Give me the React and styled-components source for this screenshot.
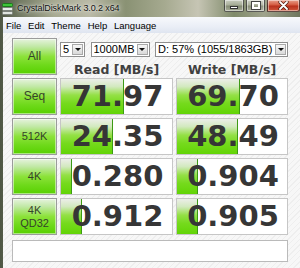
import React from "react";
import styled, { createGlobalStyle } from "styled-components";

const GlobalStyle = createGlobalStyle`
  html, body { margin: 0; padding: 0; width: 300px; height: 268px; overflow: hidden; }
  body { font-family: "Liberation Sans", Arial, sans-serif; }
  * { box-sizing: border-box; }
`;

const Frame = styled.div`
  width: 300px;
  height: 268px;
  display: flex;
  flex-direction: column;
  background: linear-gradient(90deg, #4e5644 0%, #6f7760 6%, #a7aa92 18%, #b9b9a6 30%, #8a9274 42%, #a6aa90 55%, #c6c5b4 66%, #7f8a6a 78%, #9fa38c 88%, #6e765e 100%);
`;

const TitleBar = styled.div`
  height: 17px;
  display: flex;
  align-items: flex-start;
  padding-left: 2px;
`;

const TitleText = styled.div`
  margin-left: 4px;
  margin-top: 3px;
  font-size: 9px;
  letter-spacing: -0.1px;
  line-height: 10px;
  color: #111;
  text-shadow: 0 0 5px rgba(255,255,255,0.9), 0 0 2px rgba(255,255,255,0.8);
  white-space: nowrap;
`;

const WinButtons = styled.div`
  margin-left: auto;
  display: flex;
  gap: 2px;
  height: 12px;
`;

const WinButton = styled.div`
  width: ${p => p.$w}px;
  height: 12px;
  border: 1px solid rgba(40, 40, 40, 0.7);
  border-top: none;
  border-radius: 0 0 ${p => (p.$close ? "3px 0" : "2px 2px")};
  background: ${p =>
    p.$close
      ? "linear-gradient(#e8a08c 0%, #d45a40 45%, #b8301c 55%, #d0583c 100%)"
      : "linear-gradient(rgba(255,255,255,0.55) 0%, rgba(230,230,225,0.35) 45%, rgba(120,125,110,0.35) 55%, rgba(200,200,190,0.5) 100%)"};
  box-shadow: inset 0 0 0 1px rgba(255,255,255,0.45);
  display: flex;
  align-items: center;
  justify-content: center;
`;

const MinGlyph = styled.span`
  width: 8px;
  height: 3px;
  margin-top: 4px;
  background: #fff;
  border: 1px solid #333;
`;

const MaxGlyph = styled.span`
  width: 8px;
  height: 7px;
  border: 2px solid #fff;
  outline: 1px solid #444;
`;

const Body = styled.div`
  flex: 1;
  display: flex;
  padding-left: 3px;
  min-height: 0;
`;

const Client = styled.div`
  flex: 1;
  display: flex;
  flex-direction: column;
`;

const MenuBar = styled.div`
  height: 16px;
  display: flex;
  align-items: center;
  gap: 6.8px;
  padding-left: 3px;
  background: linear-gradient(#f7f9fc 0%, #eaeef6 60%, #dfe5f0 100%);
  font-size: 9.5px;
  color: #000;
`;

const MenuItem = styled.span``;

const Content = styled.div`
  flex: 1;
  padding: 5px 0 0 9px;
  background: repeating-linear-gradient(135deg, #f7f7f7 0px, #f7f7f7 3px, #eeeeee 3px, #eeeeee 4px);
`;

const Grid = styled.div`
  display: grid;
  grid-template-columns: 45px 113px 112px;
  grid-auto-rows: 37px;
  gap: 3px;
`;

const SideButton = styled.div`
  border: 1px solid #9b9b9b;
  background: linear-gradient(to bottom, #e6f3de 0%, #c0e8a4 22%, #8ce23a 50%, #6ed91a 75%, #58d000 100%);
  box-shadow: inset 0 0 0 1px rgba(255,255,255,0.5);
  display: flex;
  align-items: center;
  justify-content: center;
  text-align: center;
  font-size: ${p => (p.$big ? 12 : 11)}px;
  line-height: 13px;
  color: #35432a;
  white-space: pre-line;
`;

const Header = styled.div`
  grid-column: span 2;
  display: flex;
  flex-direction: column;
  padding-top: 4px;
`;

const DropRow = styled.div`
  display: flex;
  justify-content: space-between;
  height: 15px;
`;

const Select = styled.div`
  width: ${p => p.$w}px;
  height: 15px;
  border: 1px solid #8f8f8f;
  background: #fff;
  display: flex;
  align-items: center;
  padding-left: 2px;
  font-size: 11px;
  color: #000;
`;

const SelectText = styled.span`
  flex: 1;
  white-space: nowrap;
  overflow: hidden;
  line-height: 13px;
`;

const Arrow = styled.span`
  width: 11px;
  height: 11px;
  margin-right: 1px;
  border: 1px solid #a9a9a9;
  background: linear-gradient(#f6f6f6, #d9d9d9);
  display: flex;
  align-items: center;
  justify-content: center;
  &::after {
    content: "";
    border-left: 3px solid transparent;
    border-right: 3px solid transparent;
    border-top: 3px solid #111;
  }
`;

const LabelRow = styled.div`
  display: grid;
  grid-template-columns: 113px 112px;
  gap: 3px;
  margin-top: 5px;
`;

const Label = styled.div`
  font-family: "DejaVu Sans", Verdana, sans-serif;
  font-weight: bold;
  font-size: 12.5px;
  line-height: 15px;
  color: #404040;
  text-align: center;
  white-space: nowrap;
`;

const ValueCell = styled.div`
  position: relative;
  border: 1px solid #c6c6c6;
  background: #fff;
  display: flex;
  align-items: center;
  justify-content: center;
  overflow: hidden;
`;

const Bar = styled.div`
  position: absolute;
  left: 0;
  top: 0;
  bottom: 0;
  background: linear-gradient(to bottom, #eceee9 0%, #d2e9be 22%, #94e046 46%, #75da1c 70%, #62d406 100%);
  border-right: 1px solid #3d9a14;
`;

const Number = styled.span`
  position: relative;
  font-family: "DejaVu Sans", Verdana, sans-serif;
  font-weight: bold;
  font-size: 29px;
  line-height: 1;
  color: #363636;
  margin-left: 2px;
`;

const Comment = styled.div`
  margin-top: 5px;
  width: 276px;
  height: 22px;
  border: 1px solid #bababa;
  background: #fff;
`;

const AppIcon = () => (
  <svg width="11" height="12" viewBox="0 0 11 12" style={{ marginTop: 3 }}>
    <rect x="0.5" y="0.5" width="10" height="3" rx="1" fill="#3ec43a" stroke="#1d7a1a" />
    <rect x="0.5" y="4.5" width="10" height="3" rx="1" fill="#e8ece8" stroke="#7a807a" />
    <rect x="0.5" y="8.5" width="10" height="3" rx="1" fill="#dfe4df" stroke="#7a807a" />
  </svg>
);

const CloseGlyph = () => (
  <svg width="11" height="9" viewBox="0 0 11 9">
    <path d="M2 1 L9 8 M9 1 L2 8" stroke="#4a1a10" strokeWidth="3.2" strokeLinecap="round" />
    <path d="M2 1 L9 8 M9 1 L2 8" stroke="#fff" strokeWidth="1.8" strokeLinecap="round" />
  </svg>
);

const rows = [
  { label: "Seq", big: true, read: "71.97", rb: 0.57, write: "69.70", wb: 0.57 },
  { label: "512K", read: "24.35", rb: 0.47, write: "48.49", wb: 0.555 },
  { label: "4K", read: "0.280", rb: 0.095, write: "0.904", wb: 0.19 },
  { label: "4K\nQD32", read: "0.912", rb: 0.19, write: "0.905", wb: 0.19 },
];

export default function App() {
  return (
    <>
      <GlobalStyle />
      <Frame>
        <TitleBar>
          <AppIcon />
          <TitleText>CrystalDiskMark 3.0.2 x64</TitleText>
          <WinButtons>
            <WinButton $w={20}><MinGlyph /></WinButton>
            <WinButton $w={19}><MaxGlyph /></WinButton>
            <WinButton $w={33} $close><CloseGlyph /></WinButton>
          </WinButtons>
        </TitleBar>
        <Body>
          <Client>
            <MenuBar>
              <MenuItem>File</MenuItem>
              <MenuItem>Edit</MenuItem>
              <MenuItem>Theme</MenuItem>
              <MenuItem>Help</MenuItem>
              <MenuItem>Language</MenuItem>
            </MenuBar>
            <Content>
              <Grid>
                <SideButton $big>All</SideButton>
                <Header>
                  <DropRow>
                    <Select $w={25}><SelectText>5</SelectText><Arrow /></Select>
                    <Select $w={59}><SelectText>1000MB</SelectText><Arrow /></Select>
                    <Select $w={133}><SelectText>D: 57% (1055/1863GB)</SelectText><Arrow /></Select>
                  </DropRow>
                  <LabelRow>
                    <Label>Read [MB/s]</Label>
                    <Label>Write [MB/s]</Label>
                  </LabelRow>
                </Header>
                {rows.map(r => (
                  <React.Fragment key={r.label}>
                    <SideButton $big={r.big}>{r.label}</SideButton>
                    <ValueCell>
                      <Bar style={{ width: `${r.rb * 100}%` }} />
                      <Number>{r.read}</Number>
                    </ValueCell>
                    <ValueCell>
                      <Bar style={{ width: `${r.wb * 100}%` }} />
                      <Number>{r.write}</Number>
                    </ValueCell>
                  </React.Fragment>
                ))}
              </Grid>
              <Comment />
            </Content>
          </Client>
        </Body>
      </Frame>
    </>
  );
}
